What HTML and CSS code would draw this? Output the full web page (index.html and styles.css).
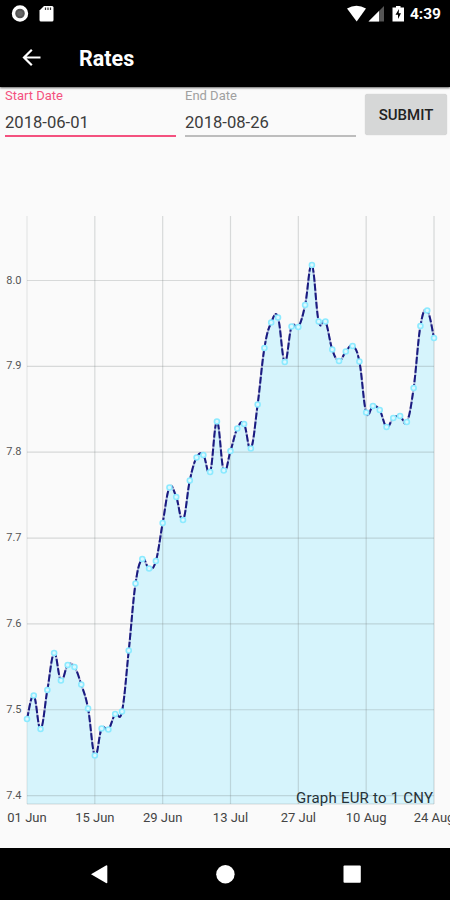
FILE: index.html
```html
<!DOCTYPE html>
<html>
	<head>
		<meta charset="utf-8">
		<title>Rates</title>
		<link rel="stylesheet" href="styles.css">
	</head>
	<body>
		<div class="status">
			<svg width="60" height="28">
				<circle cx="20" cy="13.5" r="6.5" fill="#555" stroke="#fff" stroke-width="3.4"/>
				<circle cx="20" cy="13.5" r="2.8" fill="#666"/>
				<path d="M44 6H52Q53.5 6 53.5 7.5V20Q53.5 21.5 52 21.5H41Q39.5 21.5 39.5 20V10.5Z" fill="#fff"/>
				<path d="M45.5 7.5V10M48 7.5V10M50.5 7.5V10" stroke="#333" stroke-width="1.2"/>
			</svg>
			<div class="right">
				<svg width="60" height="28">
					<path d="M0 8.5Q9.5 3 19 8.5L9.7 21.5Z" fill="#fff"/>
					<path d="M37 6V21.5H21.5Z" fill="#555"/>
					<path d="M32 11V21.5H21.5Z" fill="#fff"/>
					<path d="M45.5 7.5H49V6H53.5V7.5H57V21.5H45.5Z" fill="#fff"/>
					<path d="M52 9L48.5 14.8H51V19L54 13.2H51.7Z" fill="#000"/>
				</svg>
				<span class="time">4:39</span>
			</div>
		</div>
		<div class="toolbar">
			<svg class="back" width="20" height="20" fill="none" stroke="#fff" stroke-width="2.2">
				<path d="M19.5 9.5H3M10.8 1.7L3 9.5L10.8 17.3"/>
			</svg>
			<h1>Rates</h1>
		</div>
		<div class="form">
			<div class="field active">
				<label>Start Date</label>
				<div class="value">2018-06-01</div>
			</div>
			<div class="field">
				<label>End Date</label>
				<div class="value">2018-08-26</div>
			</div>
			<button class="submit">SUBMIT</button>
		</div>
		<svg id="chart" class="chart" width="450" height="640" viewBox="0 200 450 640">
			<path id="fill" class="fill"/>
			<g id="grid"></g>
			<path id="under" class="under"/>
			<path id="line" class="line"/>
			<g id="dots"></g>
			<text class="desc" x="433" y="803" text-anchor="end" textLength="137">Graph EUR to 1 CNY</text>
		</svg>
		<div class="nav">
			<svg width="450" height="52" fill="#fff">
				<path d="M91 26.3L106 17.5Q107.3 17 107.3 18V34.5Q107.3 35.5 106 35Z"/>
				<circle cx="225.4" cy="26.2" r="9.2"/>
				<rect x="343.5" y="17.5" width="17.3" height="17.3" rx="1"/>
			</svg>
		</div>

		<script>
			var left = 27, right = 434, top0 = 216, bottom = 804;
			var ys = [719, 695.5, 729, 690, 653, 680.5, 665, 667, 684.5, 708.5,
				755.5, 728.5, 729.5, 714, 711.5, 650.5, 583.5, 559, 568.5, 561,
				523, 487.5, 497, 520, 480.5, 457.5, 455, 472, 421.5, 470.5,
				451, 428.5, 424, 448.5, 404.5, 348, 322.5, 317.5, 362, 326.5,
				327, 305, 265, 321.5, 321.5, 349.5, 361, 351.5, 346, 361.5,
				412.5, 406, 410, 427, 418, 416, 422, 388, 326, 310.5, 338];
			var dates = ["01 Jun", "15 Jun", "29 Jun", "13 Jul", "27 Jul", "10 Aug", "24 Aug"];
			var step = (right - left) / (ys.length - 1);

			function px(i) {
				return left + i * step;
			}

			// horizontal lines, one for each 0.1
			var grid = "";
			for (var i = 0; i < 7; i++) {
				var y = 280.5 + i * 85.85;
				grid += '<path class="grid" d="M' + left + ' ' + y + 'H' + right + '"/>';
				grid += '<text class="ylabel" x="21.5" y="' + (y + 3) + '">' + (8 - i / 10).toFixed(1) + '</text>';
			}
			for (var i = 0; i < 7; i++) {
				var x = px(i * 10);
				grid += '<path class="' + (i == 0 ? "grid first" : "grid") + '" d="M' + x + ' ' + top0 + 'V' + bottom + '"/>';
				grid += '<text class="xlabel" x="' + x + '" y="821.5">' + dates[i] + '</text>';
			}
			grid += '<path class="grid" d="M' + left + ' ' + bottom + 'H' + right + '"/>';
			document.getElementById("grid").innerHTML = grid;

			// cubic curve through the points
			var k = 0.2, last = ys.length - 1;
			var d = "M" + px(0) + " " + ys[0];
			for (var i = 1; i <= last; i++) {
				var a = Math.max(i - 2, 0), b = Math.min(i + 1, last);
				d += "C" + (px(i - 1) + (px(i) - px(a)) * k) + " " + (ys[i - 1] + (ys[i] - ys[a]) * k)
					+ " " + (px(i) - (px(b) - px(i - 1)) * k) + " " + (ys[i] - (ys[b] - ys[i - 1]) * k)
					+ " " + px(i) + " " + ys[i];
			}
			document.getElementById("line").setAttribute("d", d);
			document.getElementById("under").setAttribute("d", d);
			document.getElementById("fill").setAttribute("d", d + "V" + bottom + "H" + left + "Z");

			var dots = "";
			for (var i = 0; i <= last; i++)
				dots += '<circle class="dot" cx="' + px(i) + '" cy="' + ys[i] + '" r="2.5"/>';
			document.getElementById("dots").innerHTML = dots;
		</script>
	</body>
</html>
```

FILE: styles.css
```css
body {
	margin: 0;
	width: 450px;
	height: 900px;
	overflow: hidden;
	display: flex;
	flex-direction: column;
	background-color: #fafafa;
	font-family: Roboto, sans-serif;
}
svg {
	display: block;
}
.status {
	height: 28px;
	display: flex;
	justify-content: space-between;
	background-color: #000;
	color: #fff;
}
.right {
	display: flex;
	align-items: center;
	padding-right: 9px;
}
.time {
	width: 34px;
	text-align: right;
	font-size: 15.5px;
	font-weight: 700;
	white-space: nowrap;
}
.toolbar {
	height: 59px;
	display: flex;
	align-items: center;
	background-color: #000;
	color: #fff;
	box-shadow: 0 1px 2px rgba(0, 0, 0, 0.6);
}
.back {
	margin-left: 21px;
}
h1 {
	margin: 2px 0 0 38px;
	font-size: 21.5px;
	font-weight: 700;
}
.form {
	height: 113px;
	display: flex;
	align-items: flex-start;
	padding-left: 5px;
}
.field {
	width: 171px;
	height: 48px;
	margin-right: 9px;
	border-bottom: 2px solid #bdbdbd;
	color: #3c3c3c;
}
.field label {
	display: block;
	height: 23px;
	line-height: 18px;
	font-size: 13px;
	color: #a0a0a0;
}
.active {
	border-color: #f4517f;
}
.active label {
	color: #f4517f;
}
.value {
	line-height: 25px;
	font-size: 16.6px;
}
.submit {
	width: 82px;
	height: 41px;
	margin-top: 7px;
	padding: 0;
	border: 0;
	border-radius: 3px;
	background-color: #d6d7d7;
	box-shadow: 0 0 1px #bbb;
	font-family: Roboto, sans-serif;
	font-size: 15px;
	font-weight: 500;
	color: #222;
}
.chart {
	height: 640px;
}
.fill {
	fill: #d6f4fc;
}
.grid {
	stroke: rgba(110, 120, 120, 0.25);
	stroke-width: 1.2;
}
.first {
	stroke: rgba(110, 120, 120, 0.15);
}
.under {
	fill: none;
	stroke: rgba(26, 26, 128, 0.3);
	stroke-width: 2;
}
.line {
	fill: none;
	stroke: #1a1a80;
	stroke-width: 2;
	stroke-dasharray: 7 2;
}
.dot {
	fill: #dcf8ff;
	stroke: #8ceaff;
	stroke-width: 1.6;
}
.ylabel {
	font-size: 11px;
	fill: #555;
	text-anchor: end;
}
.xlabel {
	font-size: 13px;
	fill: #444;
	text-anchor: middle;
}
.desc {
	font-size: 15px;
	fill: #263238;
}
.nav {
	margin-top: 8px;
	height: 52px;
	background-color: #000;
}
```
